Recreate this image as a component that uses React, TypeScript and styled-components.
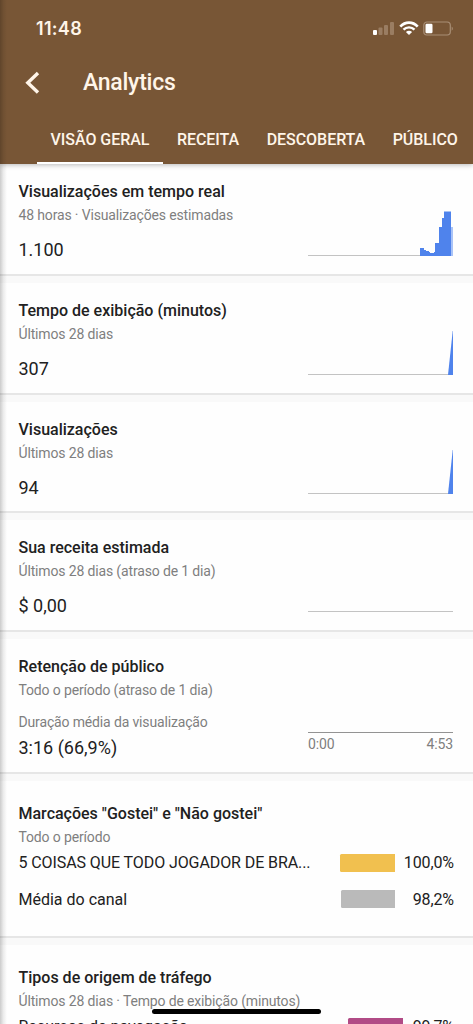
import React from 'react';
import styled, { createGlobalStyle } from 'styled-components';

const GlobalStyle = createGlobalStyle`
  * { box-sizing: border-box; }
  body { margin: 0; background: #fff; overflow: hidden; }
`;

const Screen = styled.div`
  position: relative;
  width: 473px;
  height: 1024px;
  overflow: hidden;
  background: #fefefe;
  color: #212121;
  font-family: Roboto, sans-serif;
`;

const EdgeShadow = styled.div`
  position: absolute;
  inset: 0 auto 0 0;
  width: 7px;
  background: linear-gradient(to right, rgba(0, 0, 0, 0.2), rgba(0, 0, 0, 0.07) 50%, transparent);
`;

const Header = styled.header`
  display: flex;
  flex-direction: column;
  height: 164px;
  background: #785636;
  color: #fff5e9;
  box-shadow: 0 1px 5px rgba(0, 0, 0, 0.28);
`;

const StatusBar = styled.div`
  display: flex;
  justify-content: space-between;
  height: 56px;
  padding: 17px 19px 0 36px;
`;

const Clock = styled.span`
  font: 600 18px/24px Inter, sans-serif;
  letter-spacing: 0.3px;
`;

const StatusIcons = styled.svg`
  display: block;
  margin-top: 3px;
`;

const TitleBar = styled.div`
  display: flex;
  align-items: center;
  height: 54px;
  padding-left: 24px;
`;

const BackIcon = styled.svg`
  display: block;
  margin-right: 42px;
`;

const PageTitle = styled.h1`
  margin: 0;
  font-size: 23px;
  font-weight: 500;
  letter-spacing: -0.25px;
  line-height: 30px;
`;

const Tabs = styled.nav`
  display: flex;
  height: 54px;
  padding-left: 37px;
`;

const Tab = styled.span<{ $active?: boolean }>`
  flex: none;
  height: 54px;
  padding: 18px 14px 0 13.5px;
  border-bottom: 2px solid ${(p) => (p.$active ? '#fff' : 'transparent')};
  font-size: 16px;
  font-weight: 500;
  letter-spacing: -0.04px;
  line-height: 24px;
  white-space: nowrap;
`;

const Card = styled.section<{ $height: number; $top?: number }>`
  display: flex;
  flex-direction: column;
  height: ${(p) => p.$height}px;
  padding: ${(p) => p.$top ?? 16}px 20px 0 18.5px;
`;

const Divider = styled.div`
  height: 9px;
  border-top: 2px solid #e6e6e6;
  background: #f9f9f9;
`;

const CardTitle = styled.h2`
  margin: 0 0 -1px;
  font-size: 16px;
  font-weight: 500;
  line-height: 24px;
  white-space: nowrap;
`;

const Caption = styled.div`
  color: #7f7f7f;
  font-size: 14px;
  letter-spacing: -0.15px;
  line-height: 24px;
  white-space: nowrap;
`;

const MetricRow = styled.div<{ $gap?: number }>`
  display: flex;
  justify-content: space-between;
  margin-top: ${(p) => p.$gap ?? 0}px;
`;

const Summary = styled.div`
  display: flex;
  flex-direction: column;
  gap: 1px;
`;

const Value = styled.div`
  font-size: 18px;
  line-height: 26px;
  white-space: nowrap;
`;

const ChartSvg = styled.svg`
  display: block;
  flex: none;
  margin-top: -26px;
`;

const Timeline = styled.div`
  width: 145px;
  height: 32px;
  margin-top: 22px;
  border-top: 1px solid #939393;
  display: flex;
  justify-content: space-between;
  color: #7f7f7f;
  font-size: 14px;
  letter-spacing: -0.15px;
  line-height: 22px;
`;

const BarRow = styled.div<{ $height: number }>`
  display: flex;
  align-items: center;
  height: ${(p) => p.$height}px;
  font-size: 16px;
`;

const BarLabel = styled.span<{ $tight?: boolean }>`
  flex: 1;
  letter-spacing: ${(p) => (p.$tight ? '-0.09px' : '0')};
  white-space: nowrap;
`;

const Bar = styled.span<{ $color: string; $width: number }>`
  width: ${(p) => p.$width}px;
  height: 18px;
  border-radius: 1.5px 0 0 1.5px;
  background: ${(p) => p.$color};
`;

const Percent = styled.span<{ $width?: number }>`
  width: ${(p) => p.$width ?? 59.5}px;
  margin-right: -1px;
  letter-spacing: -0.1px;
  text-align: right;
  white-space: nowrap;
`;

const HomeIndicator = styled.div`
  position: absolute;
  left: 152px;
  top: 1009px;
  width: 169px;
  height: 5px;
  border-radius: 3px;
  background: #000;
`;

type Spark = 'steps' | 'spike' | 'flat';

const Sparkline = ({ kind }: { kind: Spark }) => (
  <ChartSvg width="145" height="46" viewBox="0 0 145 46">
    <path d="M0 44.5H145" stroke="#c3c3c3" strokeWidth="1" />
    {kind === 'steps' && (
      <>
        <path fill="#4f83ec" d="M112 45V37h4v2h2v1h3v1h1v1h4v-1h1v-9h4V16h3V7h2V0.5h7V45Z" />
        <path fill="#a9c3f7" d="M143 16h2V45h-2Z" />
      </>
    )}
    {kind === 'spike' && <path fill="#4f83ec" d="M140 45L144.7 1L145 1V45Z" />}
  </ChartSvg>
);

const metrics: { title: string; caption: string; value: string; kind: Spark }[] = [
  { title: 'Visualizações em tempo real', caption: '48 horas · Visualizações estimadas', value: '1.100', kind: 'steps' },
  { title: 'Tempo de exibição (minutos)', caption: 'Últimos 28 dias', value: '307', kind: 'spike' },
  { title: 'Visualizações', caption: 'Últimos 28 dias', value: '94', kind: 'spike' },
  { title: 'Sua receita estimada', caption: 'Últimos 28 dias (atraso de 1 dia)', value: '$ 0,00', kind: 'flat' },
];

export default function App() {
  return (
    <Screen>
      <GlobalStyle />
      <Header>
        <StatusBar>
          <Clock>11:48</Clock>
          <StatusIcons width="81" height="18" viewBox="0 0 81 18" fill="none">
            <rect x="0" y="10" width="4" height="5" rx="1" fill="#fff" />
            <g fill="#9a7d62">
              <rect x="5.5" y="7.5" width="4" height="7.5" rx="1" />
              <rect x="11" y="5" width="4" height="10" rx="1" />
              <rect x="17" y="2" width="4" height="13" rx="1" />
            </g>
            <path d="M27.3 6.6C32.2 1.2 39.8 1.2 44.7 6.6" stroke="#fff" strokeWidth="2.7" />
            <path d="M30.5 9.7C33.5 6.6 38.5 6.6 41.5 9.7" stroke="#fff" strokeWidth="2.4" />
            <path d="M32.9 12.1Q36 9.5 39.1 12.1L36 15Z" fill="#fff" />
            <rect x="50.8" y="2" width="26.5" height="13" rx="3.2" stroke="#a88e75" strokeWidth="1.2" />
            <rect x="52.5" y="3.8" width="7" height="9.4" rx="1.2" fill="#fff" />
            <path d="M78.7 6.4Q81 8.5 78.7 10.8Z" fill="#a88e75" />
          </StatusIcons>
        </StatusBar>
        <TitleBar>
          <BackIcon width="17" height="24" viewBox="0 0 17 24" fill="none" stroke="#fff5e9" strokeWidth="3.4">
            <path d="M14 2L3.8 11.8L14 21.6" />
          </BackIcon>
          <PageTitle>Analytics</PageTitle>
        </TitleBar>
        <Tabs>
          <Tab $active>VISÃO GERAL</Tab>
          <Tab>RECEITA</Tab>
          <Tab>DESCOBERTA</Tab>
          <Tab>PÚBLICO</Tab>
        </Tabs>
      </Header>

      {metrics.map((m) => (
        <React.Fragment key={m.title}>
          <Card $height={109.8}>
            <CardTitle>{m.title}</CardTitle>
            <Caption>{m.caption}</Caption>
            <MetricRow $gap={10}>
              <Value>{m.value}</Value>
              <Sparkline kind={m.kind} />
            </MetricRow>
          </Card>
          <Divider />
        </React.Fragment>
      ))}

      <Card $height={132.8}>
        <CardTitle>Retenção de público</CardTitle>
        <Caption>Todo o período (atraso de 1 dia)</Caption>
        <MetricRow $gap={8}>
          <Summary>
            <Caption>Duração média da visualização</Caption>
            <Value>3:16 (66,9%)</Value>
          </Summary>
          <Timeline>
            <span>0:00</span>
            <span>4:53</span>
          </Timeline>
        </MetricRow>
      </Card>
      <Divider />

      <Card $height={155} $top={21}>
        <CardTitle>Marcações "Gostei" e "Não gostei"</CardTitle>
        <Caption>Todo o período</Caption>
        <BarRow $height={28}>
          <BarLabel $tight>5 COISAS QUE TODO JOGADOR DE BRA...</BarLabel>
          <Bar $color="#f1c04f" $width={55} />
          <Percent>100,0%</Percent>
        </BarRow>
        <BarRow $height={45}>
          <BarLabel>Média do canal</BarLabel>
          <Bar $color="#bababa" $width={54} />
          <Percent>98,2%</Percent>
        </BarRow>
      </Card>
      <Divider />

      <Card $height={160} $top={21}>
        <CardTitle>Tipos de origem de tráfego</CardTitle>
        <Caption>Últimos 28 dias · Tempo de exibição (minutos)</Caption>
        <BarRow $height={28}>
          <BarLabel>Recursos de navegação</BarLabel>
          <Bar $color="#b14b86" $width={55} />
          <Percent $width={51}>99,7%</Percent>
        </BarRow>
      </Card>

      <EdgeShadow />
      <HomeIndicator />
    </Screen>
  );
}
